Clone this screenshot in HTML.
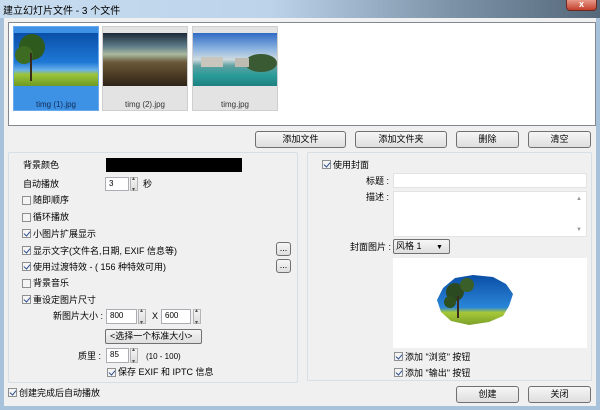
<!DOCTYPE html>
<html><head><meta charset="utf-8">
<style>
*{box-sizing:border-box;margin:0;padding:0}
body{width:600px;height:410px;overflow:hidden;font-family:"Liberation Sans","Noto Sans CJK SC",sans-serif;font-size:9px;color:#000;background:#a9c2dc;position:relative}
.a{position:absolute}
.title{left:0;top:0;width:600px;height:18px;background:linear-gradient(90deg,#c7dcef 0%,#bcd3ea 45%,#7d93a8 75%,#55687a 100%)}
.title span{position:absolute;left:3px;top:2px;font-size:10px;color:#000}
.close{left:566px;top:0;width:31px;height:11px;background:linear-gradient(#e89a8a,#c2402b);border:1px solid #6b2a22;border-top:none;border-radius:0 0 4px 4px;color:#fff;font-size:9px;text-align:center;line-height:9px;font-weight:bold}
.win{left:4px;top:18px;width:592px;height:388px;background:#f0f0f0}
.box{background:#fff;border:1px solid #a0a0a0}
.grp{border:1px solid #d5dfe5;border-radius:2px}
.btn{background:linear-gradient(#f6f6f6,#dedede);border:1px solid #707070;border-radius:3px;text-align:center;line-height:15px;font-size:9px}
.cb{width:9px;height:9px;border:1px solid #8e8f8f;background:#f4f4f4}
.cb.on::after{content:"";position:absolute;left:2px;top:0px;width:3px;height:5px;border:solid #2d4f8e;border-width:0 1.5px 1.5px 0;transform:rotate(40deg)}
.lbl{white-space:nowrap;line-height:11px}
.inp{background:#fff;border:1px solid #abadb3;font-size:8px;padding-left:3px;line-height:12px}
.spin{width:8px;border:1px solid #b5b5b5;background:linear-gradient(#f4f4f4,#dcdcdc)}
.spin::before{content:"▴";position:absolute;top:-3px;left:1px;font-size:6px;color:#555}
.spin::after{content:"▾";position:absolute;bottom:-3px;left:1px;font-size:6px;color:#555}
.thumb{width:86px;height:85px;background:#e3e3e3;border:1px solid #cfcfcf}
.thumb .t{position:absolute;left:0;top:73px;width:100%;text-align:center;font-size:8px;color:#333}
</style></head><body>
<div class="a title"><span>建立幻灯片文件 - 3 个文件</span></div>
<div class="a close">x</div>
<div class="a win"></div>

<div class="a box" style="left:8px;top:22px;width:588px;height:104px;border-color:#828790"></div>
<div class="a thumb" style="left:13px;top:26px;background:#3e92e6;border-color:#6aa9ec">
  <div class="a" style="left:0;top:6px;width:84px;height:53px;background:linear-gradient(#0a4fa8 0%,#1f78d6 55%,#6ab0e8 70%,#9cc43a 78%,#6e9a22 100%)"></div>
  <svg class="a" style="left:0;top:6px" width="84" height="53"><circle cx="18" cy="14" r="13" fill="#2f5a1e"/><circle cx="10" cy="22" r="9" fill="#3d6b22"/><rect x="16" y="20" width="2" height="28" fill="#3a2a1a"/></svg>
  <div class="t" style="color:#102a55">timg (1).jpg</div>
</div>
<div class="a thumb" style="left:102px;top:26px">
  <div class="a" style="left:0;top:6px;width:84px;height:53px;background:linear-gradient(#1c2838 0%,#5d7c88 25%,#a9b9a0 40%,#6b5a3a 55%,#4a3a24 80%,#2e2418 100%)"></div>
  <div class="t">timg (2).jpg</div>
</div>
<div class="a thumb" style="left:192px;top:26px">
  <div class="a" style="left:0;top:6px;width:84px;height:53px;background:linear-gradient(#2f6bc4 0%,#8bb3e0 30%,#cfdbe0 50%,#5fa0a0 62%,#2a9c9a 80%,#1f7f80 100%)"></div>
  <svg class="a" style="left:0;top:6px" width="84" height="53"><ellipse cx="68" cy="30" rx="16" ry="9" fill="#3a5a34"/><rect x="8" y="24" width="22" height="10" fill="#c8c6bd"/><rect x="42" y="25" width="14" height="9" fill="#bdbbb2"/></svg>
  <div class="t">timg.jpg</div>
</div>

<div class="a btn" style="left:255px;top:131px;width:91px;height:17px">添加文件</div>
<div class="a btn" style="left:355px;top:131px;width:92px;height:17px">添加文件夹</div>
<div class="a btn" style="left:456px;top:131px;width:63px;height:17px">删除</div>
<div class="a btn" style="left:528px;top:131px;width:63px;height:17px">清空</div>

<div class="a grp" style="left:8px;top:152px;width:290px;height:231px"></div>
<div class="a grp" style="left:307px;top:152px;width:285px;height:229px"></div>

<div class="a lbl" style="left:23px;top:160px">背景颜色</div>
<div class="a" style="left:106px;top:158px;width:136px;height:14px;background:#000"></div>
<div class="a lbl" style="left:23px;top:179px">自动播放</div>
<div class="a inp" style="left:105px;top:177px;width:24px;height:14px">3</div>
<div class="a spin" style="left:130px;top:177px;height:14px"></div>
<div class="a lbl" style="left:143px;top:179px">秒</div>

<div class="a cb" style="left:22px;top:196px"></div><div class="a lbl" style="left:33px;top:195px">随即顺序</div>
<div class="a cb" style="left:22px;top:213px"></div><div class="a lbl" style="left:33px;top:212px">循环播放</div>
<div class="a cb on" style="left:22px;top:229px"></div><div class="a lbl" style="left:33px;top:229px">小图片扩展显示</div>
<div class="a cb on" style="left:22px;top:246px"></div><div class="a lbl" style="left:33px;top:246px">显示文字(文件名,日期, EXIF 信息等)</div>
<div class="a btn" style="left:276px;top:242px;width:15px;height:14px;line-height:10px">...</div>
<div class="a cb on" style="left:22px;top:262px"></div><div class="a lbl" style="left:33px;top:262px">使用过渡特效 - ( 156 种特效可用)</div>
<div class="a btn" style="left:276px;top:259px;width:15px;height:14px;line-height:10px">...</div>
<div class="a cb" style="left:22px;top:279px"></div><div class="a lbl" style="left:33px;top:278px">背景音乐</div>
<div class="a cb on" style="left:22px;top:295px"></div><div class="a lbl" style="left:33px;top:295px">重设定图片尺寸</div>

<div class="a lbl" style="left:53px;top:311px">新图片大小 :</div>
<div class="a inp" style="left:106px;top:309px;width:31px;height:15px">800</div>
<div class="a spin" style="left:138px;top:309px;height:15px"></div>
<div class="a lbl" style="left:152px;top:311px">X</div>
<div class="a inp" style="left:161px;top:309px;width:30px;height:15px">600</div>
<div class="a spin" style="left:193px;top:309px;height:15px"></div>
<div class="a btn" style="left:105px;top:329px;width:97px;height:15px;line-height:13px;text-align:left;padding-left:4px;border-radius:2px">&lt;选择一个标准大小&gt; <span style="font-size:7px">▼</span></div>
<div class="a lbl" style="left:78px;top:351px">质里 :</div>
<div class="a inp" style="left:106px;top:348px;width:23px;height:15px">85</div>
<div class="a spin" style="left:130px;top:348px;height:15px"></div>
<div class="a lbl" style="left:146px;top:351px;font-size:8px">(10 - 100)</div>
<div class="a cb on" style="left:107px;top:368px"></div><div class="a lbl" style="left:118px;top:367px">保存 EXIF 和 IPTC 信息</div>

<div class="a cb on" style="left:8px;top:388px"></div><div class="a lbl" style="left:19px;top:388px">创建完成后自动播放</div>

<div class="a cb on" style="left:322px;top:160px"></div><div class="a lbl" style="left:333px;top:160px">使用封面</div>
<div class="a lbl" style="left:366px;top:176px">标题 :</div>
<div class="a inp" style="left:393px;top:173px;width:194px;height:15px;border-color:#e3e3e3"></div>
<div class="a lbl" style="left:366px;top:192px">描述 :</div>
<div class="a inp" style="left:393px;top:191px;width:194px;height:46px;border-color:#e3e3e3"></div>
<div class="a lbl" style="left:576px;top:194px;color:#999;font-size:6px">▲</div>
<div class="a lbl" style="left:576px;top:225px;color:#999;font-size:6px">▼</div>
<div class="a lbl" style="left:350px;top:242px">封面图片 :</div>
<div class="a btn" style="left:393px;top:239px;width:57px;height:15px;line-height:13px;text-align:left;padding-left:2px;border-radius:2px">风格 1 <span style="font-size:7px;margin-left:12px">▼</span></div>
<div class="a" style="left:393px;top:258px;width:194px;height:90px;background:#fff"></div>
<svg class="a" style="left:393px;top:258px" width="194" height="90">
<defs><linearGradient id="g" x1="0" y1="0" x2="0" y2="1"><stop offset="0" stop-color="#0b4ea6"/><stop offset="0.65" stop-color="#2a86d8"/><stop offset="0.75" stop-color="#a8c838"/><stop offset="1" stop-color="#7aa028"/></linearGradient></defs>
<path d="M50 30 L62 20 L80 17 L100 19 L113 26 L120 36 L116 48 L110 58 L96 64 L76 67 L58 63 L48 54 L44 42 Z" fill="url(#g)"/>
<circle cx="62" cy="34" r="9" fill="#2c4a22"/><circle cx="74" cy="27" r="7" fill="#3a5f28"/><circle cx="57" cy="44" r="6" fill="#2f5020"/><rect x="64" y="38" width="2" height="22" fill="#3a2c1c"/>
</svg>
<div class="a cb on" style="left:394px;top:352px"></div><div class="a lbl" style="left:405px;top:352px">添加 "浏览" 按钮</div>
<div class="a cb on" style="left:394px;top:368px"></div><div class="a lbl" style="left:405px;top:368px">添加 "输出" 按钮</div>

<div class="a btn" style="left:456px;top:386px;width:63px;height:17px">创建</div>
<div class="a btn" style="left:528px;top:386px;width:63px;height:17px">关闭</div>
</body></html>
